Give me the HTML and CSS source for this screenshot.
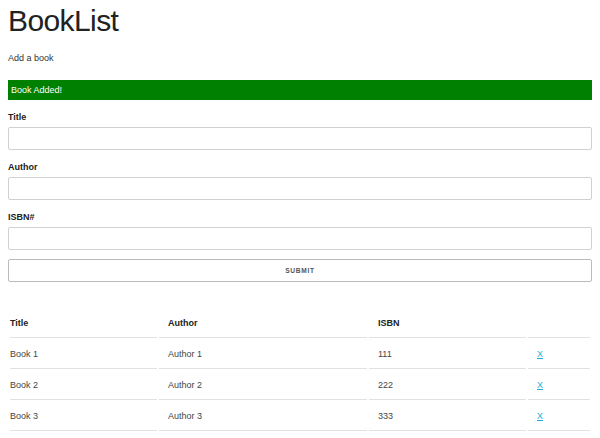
FILE: index.html
```html
<!DOCTYPE html>
<html>
<head>
<meta charset="utf-8">
<link rel="stylesheet" href="styles.css">
</head>
<body>
<div class="container">
  <h1 class="title">BookList</h1>
  <p class="subtitle">Add a book</p>
  <div class="alert">Book Added!</div>
  <form class="book-form">
    <label class="field-label" for="title">Title</label>
    <input class="field-input" id="title" type="text">
    <label class="field-label" for="author">Author</label>
    <input class="field-input" id="author" type="text">
    <label class="field-label" for="isbn">ISBN#</label>
    <input class="field-input" id="isbn" type="text">
    <button class="submit-btn" type="button">Submit</button>
  </form>
  <table class="book-table">
    <colgroup>
      <col class="c1"><col class="c2"><col class="c3"><col class="c4">
    </colgroup>
    <thead>
      <tr><th>Title</th><th>Author</th><th>ISBN</th><th></th></tr>
    </thead>
    <tbody>
      <tr><td>Book 1</td><td>Author 1</td><td>111</td><td><a class="del" href="#">X</a></td></tr>
      <tr><td>Book 2</td><td>Author 2</td><td>222</td><td><a class="del" href="#">X</a></td></tr>
      <tr><td>Book 3</td><td>Author 3</td><td>333</td><td><a class="del" href="#">X</a></td></tr>
    </tbody>
  </table>
</div>
</body>
</html>
```

FILE: styles.css
```css
html, body {
  margin: 0;
  padding: 0;
  background: #fff;
  overflow: hidden;
}
body {
  font-family: "Liberation Sans", Arial, sans-serif;
  font-size: 9px;
  line-height: 14px;
  color: #222;
}
.container {
  padding: 0 8px;
}
.title {
  margin: 3px 0 0 0;
  font-size: 30px;
  line-height: 36px;
  font-weight: 400;
  letter-spacing: -0.6px;
  color: #222;
}
.subtitle {
  margin: 12px 0 0 0;
  color: #333;
}
.alert {
  margin-top: 15px;
  background: #008000;
  color: #fff;
  padding: 3px 3px;
  line-height: 14px;
}
.book-form {
  display: flex;
  flex-direction: column;
  margin: 10px 0 0 0;
}
.field-label {
  font-weight: 700;
  line-height: 14px;
  margin-bottom: 3px;
}
.field-input {
  box-sizing: border-box;
  height: 23px;
  margin: 0 0 10px 0;
  border: 1px solid #d1d1d1;
  border-radius: 2px;
  background: #fff;
  padding: 0 6px;
}
.field-input:last-of-type {
  margin-bottom: 9px;
}
.submit-btn {
  box-sizing: border-box;
  height: 23px;
  border: 1px solid #bbb;
  border-radius: 2px;
  background: transparent;
  font-family: "Liberation Sans", Arial, sans-serif;
  font-size: 6.6px;
  font-weight: 700;
  letter-spacing: 0.7px;
  text-transform: uppercase;
  color: #555;
  padding: 0;
}
.book-table {
  margin-top: 25px;
  width: 584px;
  table-layout: fixed;
  border-spacing: 2px;
}
.c1 { width: 147px; }
.c2 { width: 208px; }
.c3 { width: 157px; }
.c4 { width: 62px; }
.book-table th,
.book-table td {
  text-align: left;
  padding: 7px 9px;
  line-height: 14px;
  border-bottom: 1px solid #e1e1e1;
}
.book-table th {
  font-weight: 700;
  color: #222;
}
.book-table td {
  color: #444;
}
.book-table th:first-child,
.book-table td:first-child {
  padding-left: 0;
}
.book-table th:last-child,
.book-table td:last-child {
  padding-right: 0;
}
.del {
  color: #1eaedb;
  text-decoration: underline;
}
```
